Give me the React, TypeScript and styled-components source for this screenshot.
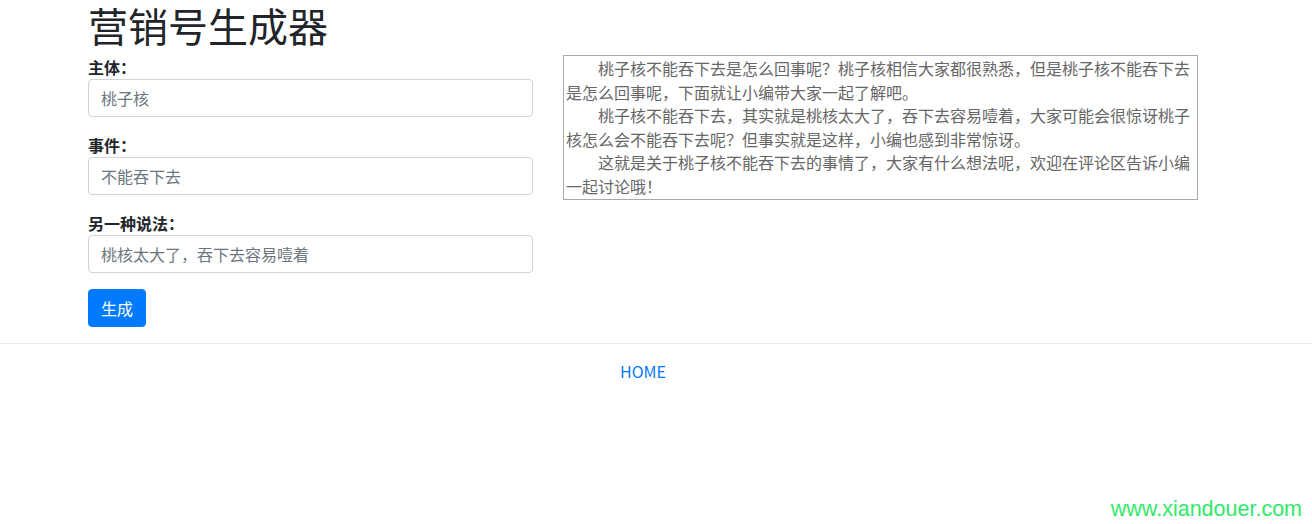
import React, { useState } from 'react';
import styled, { createGlobalStyle } from 'styled-components';

const GlobalStyle = createGlobalStyle`
  html, body {
    margin: 0;
    padding: 0;
    background: #fff;
  }
  body {
    font-family: "Noto Sans CJK SC", "Noto Sans", "Liberation Sans", sans-serif;
    font-size: 16px;
    line-height: 1.5;
    color: #212529;
  }
  * {
    box-sizing: border-box;
  }
`;

const Page = styled.div`
  position: relative;
  min-height: 524px;
`;

const Container = styled.div`
  width: 1140px;
  margin-left: 73px;
  padding: 0 15px;
`;

const Title = styled.h1`
  margin: 0 0 6px;
  padding-top: 1px;
  font-size: 40px;
  font-weight: 400;
  line-height: 48px;
  color: #212529;
`;

const Row = styled.div`
  display: flex;
  margin: 0 -15px;
`;

const Col = styled.div<{ $span: number }>`
  flex: 0 0 ${p => (p.$span / 12) * 100}%;
  max-width: ${p => (p.$span / 12) * 100}%;
  padding: 0 15px;
`;

const FormGroup = styled.div`
  margin-bottom: 16px;
`;

const Label = styled.label`
  display: block;
  font-weight: 700;
  line-height: 24px;
  margin: 0;
`;

const Input = styled.input`
  display: block;
  width: 100%;
  height: 38px;
  padding: 6px 12px;
  font-family: inherit;
  font-size: 16px;
  line-height: 1.5;
  color: #495057;
  background: #fff;
  border: 1px solid #ced4da;
  border-radius: 4px;
  outline: none;

  &::placeholder {
    color: #6c757d;
  }
`;

const Button = styled.button`
  display: inline-block;
  height: 38px;
  padding: 6px 12px;
  font-family: inherit;
  font-size: 16px;
  line-height: 1.5;
  color: #fff;
  background: #007bff;
  border: 1px solid #007bff;
  border-radius: 4px;
  cursor: pointer;
`;

const Output = styled.div`
  border: 1px solid #a9a9a9;
  padding: 1px 2px;
  color: #666;
  font-size: 16px;
  line-height: 23.5px;
  min-height: 145px;
`;

const Para = styled.p`
  margin: 0;
  text-indent: 2em;
`;

const Divider = styled.hr`
  margin: 16px 0 0;
  border: 0;
  border-top: 1px solid #e9ecef;
`;

const Footer = styled.footer`
  padding: 15px 0;
  text-align: center;
`;

const HomeLink = styled.a`
  color: #007bff;
  text-decoration: none;
  font-size: 16px;
  line-height: 24px;
`;

const Watermark = styled.div`
  position: absolute;
  right: 10px;
  bottom: 3px;
  font-family: "Liberation Sans", Arial, sans-serif;
  font-size: 21.5px;
  line-height: 24px;
  color: #2fe86a;
`;

const build = (subject: string, event: string, other: string) => [
  `${subject}${event}是怎么回事呢？${subject}相信大家都很熟悉，但是${subject}${event}是怎么回事呢，下面就让小编带大家一起了解吧。`,
  `${subject}${event}，其实就是${other}，大家可能会很惊讶${subject}怎么会${event}呢？但事实就是这样，小编也感到非常惊讶。`,
  `这就是关于${subject}${event}的事情了，大家有什么想法呢，欢迎在评论区告诉小编一起讨论哦！`,
];

export default function App() {
  const [subject, setSubject] = useState('');
  const [event, setEvent] = useState('');
  const [other, setOther] = useState('');
  const [text, setText] = useState(build('桃子核', '不能吞下去', '桃核太大了，吞下去容易噎着'));

  const handleGenerate = () => {
    setText(
      build(
        subject || '桃子核',
        event || '不能吞下去',
        other || '桃核太大了，吞下去容易噎着'
      )
    );
  };

  return (
    <Page>
      <GlobalStyle />
      <Container>
        <Title>营销号生成器</Title>
        <Row>
          <Col $span={5}>
            <FormGroup>
              <Label>主体：</Label>
              <Input placeholder="桃子核" value={subject} onChange={e => setSubject(e.target.value)} />
            </FormGroup>
            <FormGroup>
              <Label>事件：</Label>
              <Input placeholder="不能吞下去" value={event} onChange={e => setEvent(e.target.value)} />
            </FormGroup>
            <FormGroup>
              <Label>另一种说法：</Label>
              <Input
                placeholder="桃核太大了，吞下去容易噎着"
                value={other}
                onChange={e => setOther(e.target.value)}
              />
            </FormGroup>
            <Button onClick={handleGenerate}>生成</Button>
          </Col>
          <Col $span={7}>
            <Output>
              {text.map((p, i) => (
                <Para key={i}>{p}</Para>
              ))}
            </Output>
          </Col>
        </Row>
      </Container>
      <Divider />
      <Container>
        <Footer>
          <HomeLink href="#">HOME</HomeLink>
        </Footer>
      </Container>
      <Watermark>www.xiandouer.com</Watermark>
    </Page>
  );
}
